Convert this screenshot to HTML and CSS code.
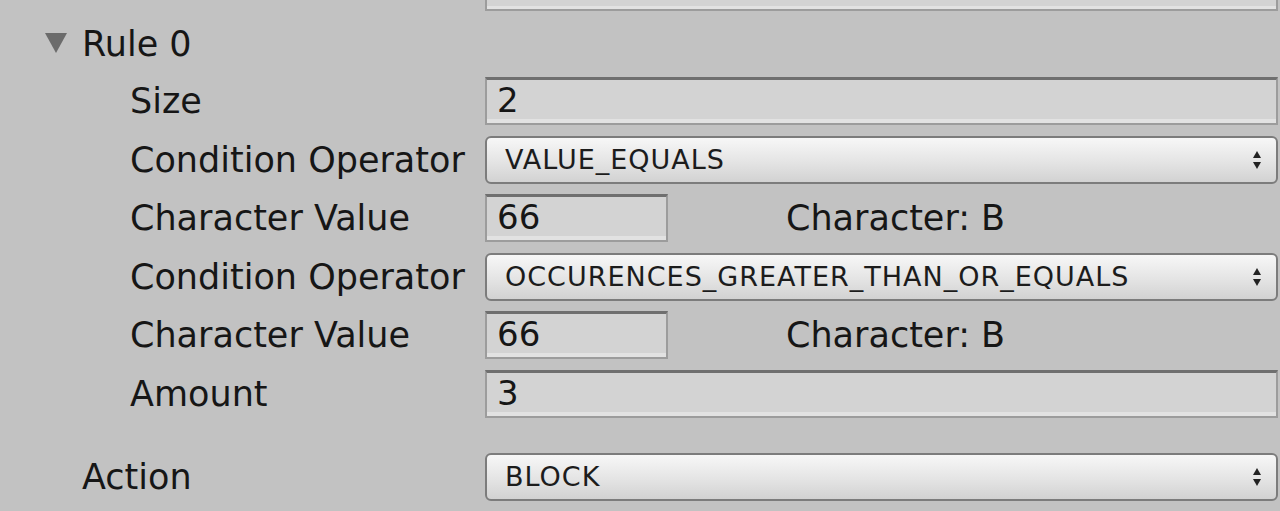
FILE: index.html
```html
<!DOCTYPE html>
<html lang="en">
<head>
    <meta charset="UTF-8">
    <meta name="viewport" content="width=device-width, initial-scale=1.0">
    <title>Rule Inspector</title>
    <link rel="stylesheet" href="styles.css">
</head>
<body>

    <!-- Inspector panel -->
    <div class="inspector">

        <!-- Field above, cut off by the screenshot -->
        <div class="row row-top">
            <div class="label"></div>
            <div class="text-field field-cut"></div>
        </div>

        <!-- Foldout header -->
        <div class="foldout">
            <svg class="foldout-arrow" width="24" height="22" viewBox="0 0 24 22">
                <polygon points="1,1 23,1 12,21" fill="#6b6b6b"/>
            </svg>
            <span class="foldout-title">Rule 0</span>
        </div>

        <!-- Rule properties -->
        <div class="rule-body">
            <div class="row">
                <div class="label nested">Size</div>
                <div class="text-field">2</div>
            </div>
            <div class="row">
                <div class="label nested">Condition Operator</div>
                <div class="popup">
                    <span>VALUE_EQUALS</span>
                    <svg class="popup-arrows" width="10" height="20" viewBox="0 0 10 20">
                        <polygon points="5,1 9,8 1,8" fill="#222"/>
                        <polygon points="1,12 9,12 5,19" fill="#222"/>
                    </svg>
                </div>
            </div>
            <div class="row">
                <div class="label nested">Character Value</div>
                <div class="text-field short">66</div>
                <div class="char-note">Character: B</div>
            </div>
            <div class="row">
                <div class="label nested">Condition Operator</div>
                <div class="popup">
                    <span>OCCURENCES_GREATER_THAN_OR_EQUALS</span>
                    <svg class="popup-arrows" width="10" height="20" viewBox="0 0 10 20">
                        <polygon points="5,1 9,8 1,8" fill="#222"/>
                        <polygon points="1,12 9,12 5,19" fill="#222"/>
                    </svg>
                </div>
            </div>
            <div class="row">
                <div class="label nested">Character Value</div>
                <div class="text-field short">66</div>
                <div class="char-note">Character: B</div>
            </div>
            <div class="row">
                <div class="label nested">Amount</div>
                <div class="text-field">3</div>
            </div>
        </div>

        <!-- Action -->
        <div class="row row-action">
            <div class="label">Action</div>
            <div class="popup">
                <span>BLOCK</span>
                <svg class="popup-arrows" width="10" height="20" viewBox="0 0 10 20">
                    <polygon points="5,1 9,8 1,8" fill="#222"/>
                    <polygon points="1,12 9,12 5,19" fill="#222"/>
                </svg>
            </div>
        </div>

    </div>

</body>
</html>
```

FILE: styles.css
```css
/* General Styling */
body {
    margin: 0;
    padding: 0;
    background: #c2c2c2;
    color: #161616;
    font-family: "DejaVu Sans", sans-serif;
    font-size: 35px;
    overflow: hidden;
}

.inspector {
    padding-right: 2px;
}

/* Rows */
.row {
    display: flex;
    align-items: center;
    height: 48px;
    margin-bottom: 10.6px;
}

.row .label {
    width: 485px;
    flex-shrink: 0;
    padding-left: 82px;
    box-sizing: border-box;
    white-space: nowrap;
}

.row .label.nested {
    padding-left: 130px;
}

.row-top {
    height: 11px;
    margin-bottom: 0;
    align-items: flex-end;
}

.row-action {
    margin-top: 35px;
}

/* Foldout header */
.foldout {
    display: flex;
    align-items: center;
    height: 48px;
    margin: 9px 0 9px 0;
    padding-left: 44px;
}

.foldout-arrow {
    margin-right: 14px;
    margin-top: -2px;
}

/* Text fields */
.text-field {
    flex: 1;
    height: 100%;
    box-sizing: border-box;
    background: #d3d3d3;
    border: 2px solid #9c9c9c;
    border-top: 3px solid #6f6f6f;
    box-shadow: inset 0 -4px 0 #e2e2e2;
    padding-left: 10px;
    font-size: 34px;
    line-height: 41px;
}

.text-field.short {
    flex: 0 0 183px;
}

.field-cut {
    height: 11px;
    border-top: none;
    box-shadow: inset 0 -3px 0 #e2e2e2;
}

.char-note {
    margin-left: 118px;
}

/* Popup (dropdown) */
.popup {
    flex: 1;
    height: 48px;
    box-sizing: border-box;
    display: flex;
    align-items: center;
    justify-content: space-between;
    padding: 0 14px 0 18px;
    border: 2px solid #7c7c7c;
    border-radius: 6px;
    background: linear-gradient(to bottom, #f7f7f7, #e4e4e4 55%, #d2d2d2);
    font-size: 27px;
    letter-spacing: 1px;
    color: #1c1c1c;
}

.popup-arrows {
    flex-shrink: 0;
}
```
